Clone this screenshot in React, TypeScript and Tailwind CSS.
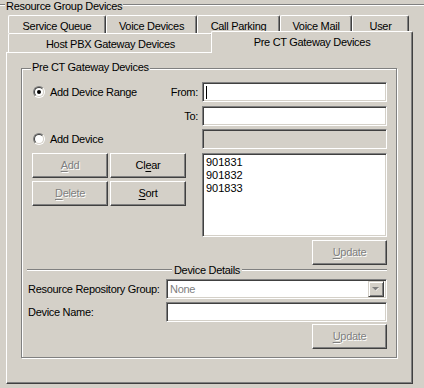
const FACE = "bg-[#d4d0c8]";

function Radio({ checked }: { checked?: boolean }) {
  return (
    <div className="flex h-[12px] w-[12px] shrink-0 rounded-full border border-t-[#808080] border-l-[#808080] border-r-white border-b-white">
      <div className="flex h-full w-full items-center justify-center rounded-full border border-t-[#404040] border-l-[#404040] border-r-[#d4d0c8] border-b-[#d4d0c8] bg-white">
        {checked && <div className="h-[4px] w-[4px] rounded-full bg-black" />}
      </div>
    </div>
  );
}

function Field({ className, children }: { className: string; children?: React.ReactNode }) {
  return (
    <div
      className={`flex items-center border border-t-[#808080] border-l-[#808080] border-r-white border-b-white shadow-[inset_1px_1px_0_#404040,inset_-1px_-1px_0_#d4d0c8] ${className}`}
    >
      {children}
    </div>
  );
}

function Button({ mn, rest, pre, disabled, className }: { pre?: string; mn: string; rest: string; disabled?: boolean; className: string }) {
  return (
    <div
      className={`flex items-center justify-center border border-t-white border-l-white border-r-[#404040] border-b-[#404040] shadow-[inset_-1px_-1px_0_#808080] ${className} ${
        disabled ? "text-[#808080] [text-shadow:1px_1px_0_#fff]" : "text-black"
      }`}
    >
      <span>
        {pre}
        <span className="underline underline-offset-[2px]">{mn}</span>
        {rest}
      </span>
    </div>
  );
}

function BackTab({ label, className }: { label: string; className: string }) {
  return (
    <div
      className={`flex h-[18px] items-center justify-center whitespace-nowrap rounded-t-[2px] border-t border-l border-r border-t-white border-l-white border-r-[#404040] pt-[3px] shadow-[inset_-1px_0_0_#808080] ${className}`}
    >
      {label}
    </div>
  );
}

export default function App() {
  return (
    <div className={`h-[388px] w-[424px] overflow-hidden ${FACE} font-['Liberation_Sans',Arial,sans-serif] text-[11px] leading-[13px] tracking-[-0.3px] text-black`}>
      {/* Resource Group Devices */}
      <div className="relative ml-[-2px] mt-[4px] h-[420px] w-[440px] border-t border-l border-[#808080] pl-[7px] pt-[10px] shadow-[inset_1px_1px_0_#fff]">
        <span className={`absolute -top-[5px] left-[6px] whitespace-nowrap ${FACE} px-[1px]`}>Resource Group Devices</span>

        {/* tab rows */}
        <div className="flex pl-[2px]">
          <BackTab label="Service Queue" className="w-[98px]" />
          <BackTab label="Voice Devices" className="w-[91px]" />
          <BackTab label="Call Parking" className="w-[83px]" />
          <BackTab label="Voice Mail" className="w-[72px]" />
          <BackTab label="User" className="w-[57px]" />
        </div>
        <div className="flex h-[19px] items-end pl-[2px]">
          <div className="flex h-[19px] w-[205px] items-center justify-center rounded-t-[2px] border-t border-l border-r border-t-white border-l-white border-r-[#404040] pt-[2px] shadow-[inset_-1px_0_0_#808080]">
            Host PBX Gateway Devices
          </div>
          <div className={`relative z-10 -mb-[1px] ml-[-2px] flex h-[22px] w-[202px] items-center justify-center rounded-t-[2px] border-t border-l border-r border-t-white border-l-white border-r-[#404040] ${FACE} shadow-[inset_-1px_0_0_#808080]`}>
            Pre CT Gateway Devices
          </div>
        </div>

        {/* tab panel */}
        <div className="h-[332px] w-[407px] border border-t-white border-l-white border-r-[#404040] border-b-[#404040] pl-[14px] pt-[15px] shadow-[inset_-1px_-1px_0_#808080]">
          <div className="relative flex h-[290px] w-[376px] flex-col border border-[#808080] pl-[10px] pr-[9px] pt-[13px] shadow-[inset_1px_1px_0_#fff,1px_1px_0_#fff]">
            <span className={`absolute -top-[8px] left-[9px] whitespace-nowrap ${FACE} px-[1px]`}>Pre CT Gateway Devices</span>

            <div className="flex h-[20px] items-center">
              <div className="flex w-[170px] items-center pl-[1px]">
                <Radio checked />
                <span className="ml-[5px] whitespace-nowrap">Add Device Range</span>
                <span className="ml-auto mr-[4px]">From:</span>
              </div>
              <Field className="h-[20px] w-[185px] bg-white">
                <div className="ml-[3px] h-[13px] w-[1px] bg-black" />
              </Field>
            </div>

            <div className="mt-[4px] flex h-[20px] items-center">
              <div className="flex w-[170px] items-center">
                <span className="ml-auto mr-[4px]">To:</span>
              </div>
              <Field className="h-[20px] w-[185px] bg-white" />
            </div>

            <div className="mt-[3px] flex h-[20px] items-center">
              <div className="flex w-[170px] items-center pl-[1px]">
                <Radio />
                <span className="ml-[5px] whitespace-nowrap">Add Device</span>
              </div>
              <Field className="h-[20px] w-[185px] bg-[#d4d0c8]" />
            </div>

            <div className="mt-[4px] flex">
              <div className="w-[170px]">
                <div className="grid grid-cols-[76px_76px] gap-x-[2px] gap-y-[3px]">
                  <Button mn="A" rest="dd" disabled className="h-[25px]" />
                  <Button pre="Cl" mn="e" rest="ar" className="h-[25px]" />
                  <Button mn="D" rest="elete" disabled className="h-[25px]" />
                  <Button mn="S" rest="ort" className="h-[25px]" />
                </div>
              </div>
              <div className="h-[84px] w-[185px] border border-t-[#808080] border-l-[#808080] border-r-white border-b-white bg-white pl-[3px] pt-[2px] tracking-normal shadow-[inset_1px_1px_0_#404040,inset_-1px_-1px_0_#d4d0c8]">
                <div>901831</div>
                <div>901832</div>
                <div>901833</div>
              </div>
            </div>

            <div className="mt-[3px] flex justify-end">
              <Button mn="U" rest="pdate" disabled className="h-[25px] w-[75px]" />
            </div>

            <div className="-ml-[5px] mt-[-2px] flex h-[14px] items-center">
              <div className="h-[2px] flex-1 border-t border-b border-t-[#808080] border-b-white" />
              <span className="whitespace-nowrap px-[2px]">Device Details</span>
              <div className="h-[2px] flex-1 border-t border-b border-t-[#808080] border-b-white" />
            </div>

            <div className="mt-[2px] flex h-[20px] items-center">
              <span className="-ml-[4px] w-[138px] whitespace-nowrap">Resource Repository Group:</span>
              <Field className="h-[20px] w-[221px] justify-between bg-white pl-[3px]">
                <span className="text-[#808080]">None</span>
                <div className="mr-[2px] flex h-[16px] w-[16px] items-center justify-center border border-t-[#d4d0c8] border-l-[#d4d0c8] border-r-[#404040] border-b-[#404040] bg-[#d4d0c8] shadow-[inset_1px_1px_0_#fff,inset_-1px_-1px_0_#808080]">
                  <svg width="8" height="5" viewBox="0 0 8 5">
                    <path d="M1 1h6L4 4z" fill="#fff" />
                    <path d="M0 0h7L3.5 3.5z" fill="#808080" />
                  </svg>
                </div>
              </Field>
            </div>

            <div className="mt-[3px] flex h-[20px] items-center">
              <span className="-ml-[4px] w-[138px] whitespace-nowrap">Device Name:</span>
              <Field className="h-[20px] w-[221px] bg-white" />
            </div>

            <div className="mt-[2px] flex justify-end">
              <Button mn="U" rest="pdate" disabled className="h-[25px] w-[75px]" />
            </div>
          </div>
        </div>
      </div>
    </div>
  );
}
